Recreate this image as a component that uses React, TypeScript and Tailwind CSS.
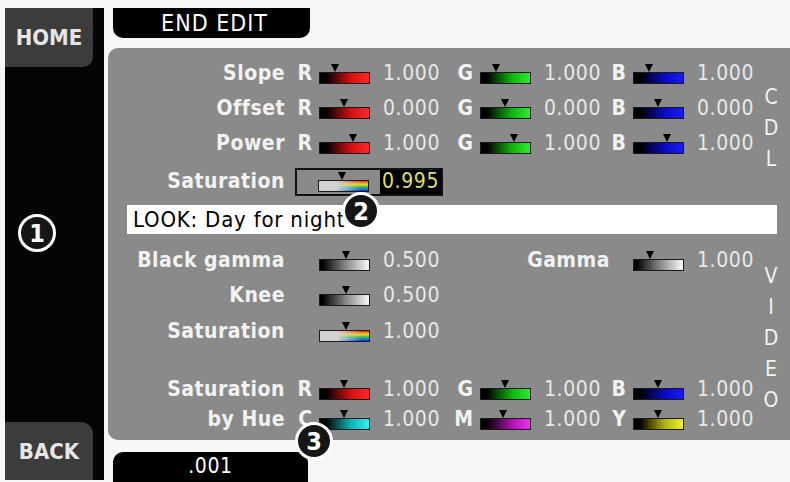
import React from "react";

type Fill = "red" | "green" | "blue" | "cyan" | "magenta" | "yellow" | "gray" | "rainbow";

const FILL: Record<Fill, string> = {
  red: "bg-[linear-gradient(90deg,#000_12%,#d01010_62%,#ff2a2a)]",
  green: "bg-[linear-gradient(90deg,#000_12%,#10b010_62%,#2af02a)]",
  blue: "bg-[linear-gradient(90deg,#000_12%,#0a0ac0_62%,#1a1aff)]",
  cyan: "bg-[linear-gradient(90deg,#000_12%,#10b0b0_62%,#30f0f0)]",
  magenta: "bg-[linear-gradient(90deg,#000_12%,#b010b0_62%,#f030f0)]",
  yellow: "bg-[linear-gradient(90deg,#000_12%,#b0b010_62%,#f0f030)]",
  gray: "bg-[linear-gradient(90deg,#000_5%,#808080_50%,#fafafa)]",
  rainbow:
    "bg-[image:linear-gradient(90deg,#d2d2d2_35%,rgba(210,210,210,0)_85%),linear-gradient(180deg,#f02020,#f0a020,#e0e020,#20c040,#2080f0,#2020c0)]",
};

const LETTER_W = ["w-[32px]", "w-[38px]", "w-[30px]"];

type Channel = { ch: string; fill: Fill; pos: number; value: string };

function Slider({ fill, pos }: { fill: Fill; pos: number }) {
  return (
    <div className="flex flex-col w-[51px] shrink-0">
      <div
        className="w-0 h-0 border-x-[4px] border-x-transparent border-t-[8px] border-t-black"
        style={{ marginLeft: pos - 4 }}
      />
      <div className={`h-[12px] w-[51px] border border-[#1a1a1a] ${FILL[fill]}`} />
    </div>
  );
}

function Value({ children }: { children: React.ReactNode }) {
  return <span className="ml-[13px] w-[57px] shrink-0 tracking-[0.6px] text-[#e8e8e8]">{children}</span>;
}

function Group({ idx, c }: { idx: number; c: Channel }) {
  return (
    <>
      <span className={`${LETTER_W[idx]} shrink-0 text-right pr-[5px] font-bold`}>{c.ch}</span>
      <div className="ml-[2px]">
        <Slider fill={c.fill} pos={c.pos} />
      </div>
      <Value>{c.value}</Value>
    </>
  );
}

function Label({ children }: { children: React.ReactNode }) {
  return <span className="w-[177px] shrink-0 text-right font-bold tracking-[0.5px]">{children}</span>;
}

function RgbRow({ label, pos, value, h }: { label: string; pos: number; value: string; h: string }) {
  const chans: Channel[] = [
    { ch: "R", fill: "red", pos, value },
    { ch: "G", fill: "green", pos, value },
    { ch: "B", fill: "blue", pos, value },
  ];
  return (
    <div className={`flex items-center ${h}`}>
      <Label>{label}</Label>
      {chans.map((c, i) => (
        <Group key={c.ch} idx={i} c={c} />
      ))}
    </div>
  );
}

function Badge({ n, className }: { n: number; className: string }) {
  return (
    <div
      className={`absolute w-[38px] h-[38px] rounded-full bg-[#161616] border-[3px] border-white flex items-center justify-center text-white font-bold text-[25px] leading-none ${className}`}
    >
      {n}
    </div>
  );
}

export default function App() {
  return (
    <div className="relative w-[790px] h-[482px] overflow-hidden bg-[#f6f6f6] flex [font-family:'DejaVu_Sans_Condensed','DejaVu_Sans',sans-serif] text-[21px] text-[#f2f2f2]">
      {/* left soft-key strip */}
      <div className="ml-[5px] mt-[8px] w-[99px] h-[472px] bg-[#050505] flex flex-col justify-between">
        <div className="w-[88px] h-[59px] bg-[#3c3c3c] rounded-br-[10px] flex items-center justify-center text-[22px] font-bold text-[#e6e6e6]">
          HOME
        </div>
        <div className="w-[88px] h-[58px] bg-[#3c3c3c] rounded-tr-[12px] flex items-center justify-center text-[22px] font-bold text-[#e6e6e6]">
          BACK
        </div>
      </div>

      <div className="ml-[4px] flex-1 flex flex-col">
        <div className="ml-[5px] mt-[8px] w-[197px] h-[30px] bg-black rounded-b-[10px] flex items-center justify-center pl-[6px] text-[23px] tracking-[1px] text-white">
          END EDIT
        </div>

        <div className="mt-[10px] h-[392px] bg-[#8a8a8a] rounded-l-[10px] flex flex-col">
          {/* CDL block */}
          <div className="flex">
            <div className="flex-1 pt-[8px]">
              <RgbRow label="Slope" pos={16} value="1.000" h="h-[35px]" />
              <RgbRow label="Offset" pos={25} value="0.000" h="h-[35px]" />
              <RgbRow label="Power" pos={34} value="1.000" h="h-[35px]" />
              <div className="flex items-center h-[34px] mt-[4px]">
                <Label>Saturation</Label>
                <div className="ml-[10px] h-[28px] border-2 border-[#111] flex">
                  <div className="w-[83px] pl-[21px] flex items-center">
                    <Slider fill="rainbow" pos={24} />
                  </div>
                  <div className="w-[61px] bg-black flex items-center pl-[2px] tracking-[0.6px] text-[#dede6a]">0.995</div>
                </div>
              </div>
            </div>
            <div className="w-[24px] mr-[7px] pt-[34px] flex flex-col items-center leading-[31px]">
              <span>C</span>
              <span>D</span>
              <span>L</span>
            </div>
          </div>

          <div className="mt-[6px] ml-[19px] mr-[13px] h-[29px] bg-white flex items-center pl-[6px] text-[22px] tracking-[0.8px] text-black">
            LOOK: Day for night
          </div>

          {/* video block */}
          <div className="flex">
            <div className="flex-1 pt-[10px]">
              <div className="flex items-center h-[34px]">
                <Label>Black gamma</Label>
                <span className="w-[32px] shrink-0" />
                <div className="ml-[2px]">
                  <Slider fill="gray" pos={27} />
                </div>
                <Value>0.500</Value>
                <span className="w-[191px] shrink-0 text-right pr-[21px] font-bold tracking-[0.5px]">Gamma</span>
                <div className="ml-[2px]">
                  <Slider fill="gray" pos={17} />
                </div>
                <Value>1.000</Value>
              </div>
              <div className="flex items-center h-[36px]">
                <Label>Knee</Label>
                <span className="w-[32px] shrink-0" />
                <div className="ml-[2px]">
                  <Slider fill="gray" pos={27} />
                </div>
                <Value>0.500</Value>
              </div>
              <div className="flex items-center h-[36px]">
                <Label>Saturation</Label>
                <span className="w-[32px] shrink-0" />
                <div className="ml-[2px]">
                  <Slider fill="rainbow" pos={27} />
                </div>
                <Value>1.000</Value>
              </div>
              <div className="mt-[25px]">
                <RgbRow label="Saturation" pos={25} value="1.000" h="h-[30px]" />
              </div>
              <div className="flex items-center h-[30px]">
                <Label>by Hue</Label>
                <Group idx={0} c={{ ch: "C", fill: "cyan", pos: 25, value: "1.000" }} />
                <Group idx={1} c={{ ch: "M", fill: "magenta", pos: 23, value: "1.000" }} />
                <Group idx={2} c={{ ch: "Y", fill: "yellow", pos: 25, value: "1.000" }} />
              </div>
            </div>
            <div className="w-[24px] mr-[7px] pt-[27px] flex flex-col items-center leading-[31px]">
              <span>V</span>
              <span>I</span>
              <span>D</span>
              <span>E</span>
              <span>O</span>
            </div>
          </div>
        </div>

        <div className="ml-[5px] mt-[12px] w-[195px] h-[30px] bg-black rounded-t-[10px] flex items-center justify-center text-[21px] tracking-[0.6px] text-white">
          .001
        </div>
      </div>

      <Badge n={1} className="left-[18px] top-[214px]" />
      <Badge n={2} className="left-[342px] top-[192px]" />
      <Badge n={3} className="left-[295px] top-[422px]" />
    </div>
  );
}
